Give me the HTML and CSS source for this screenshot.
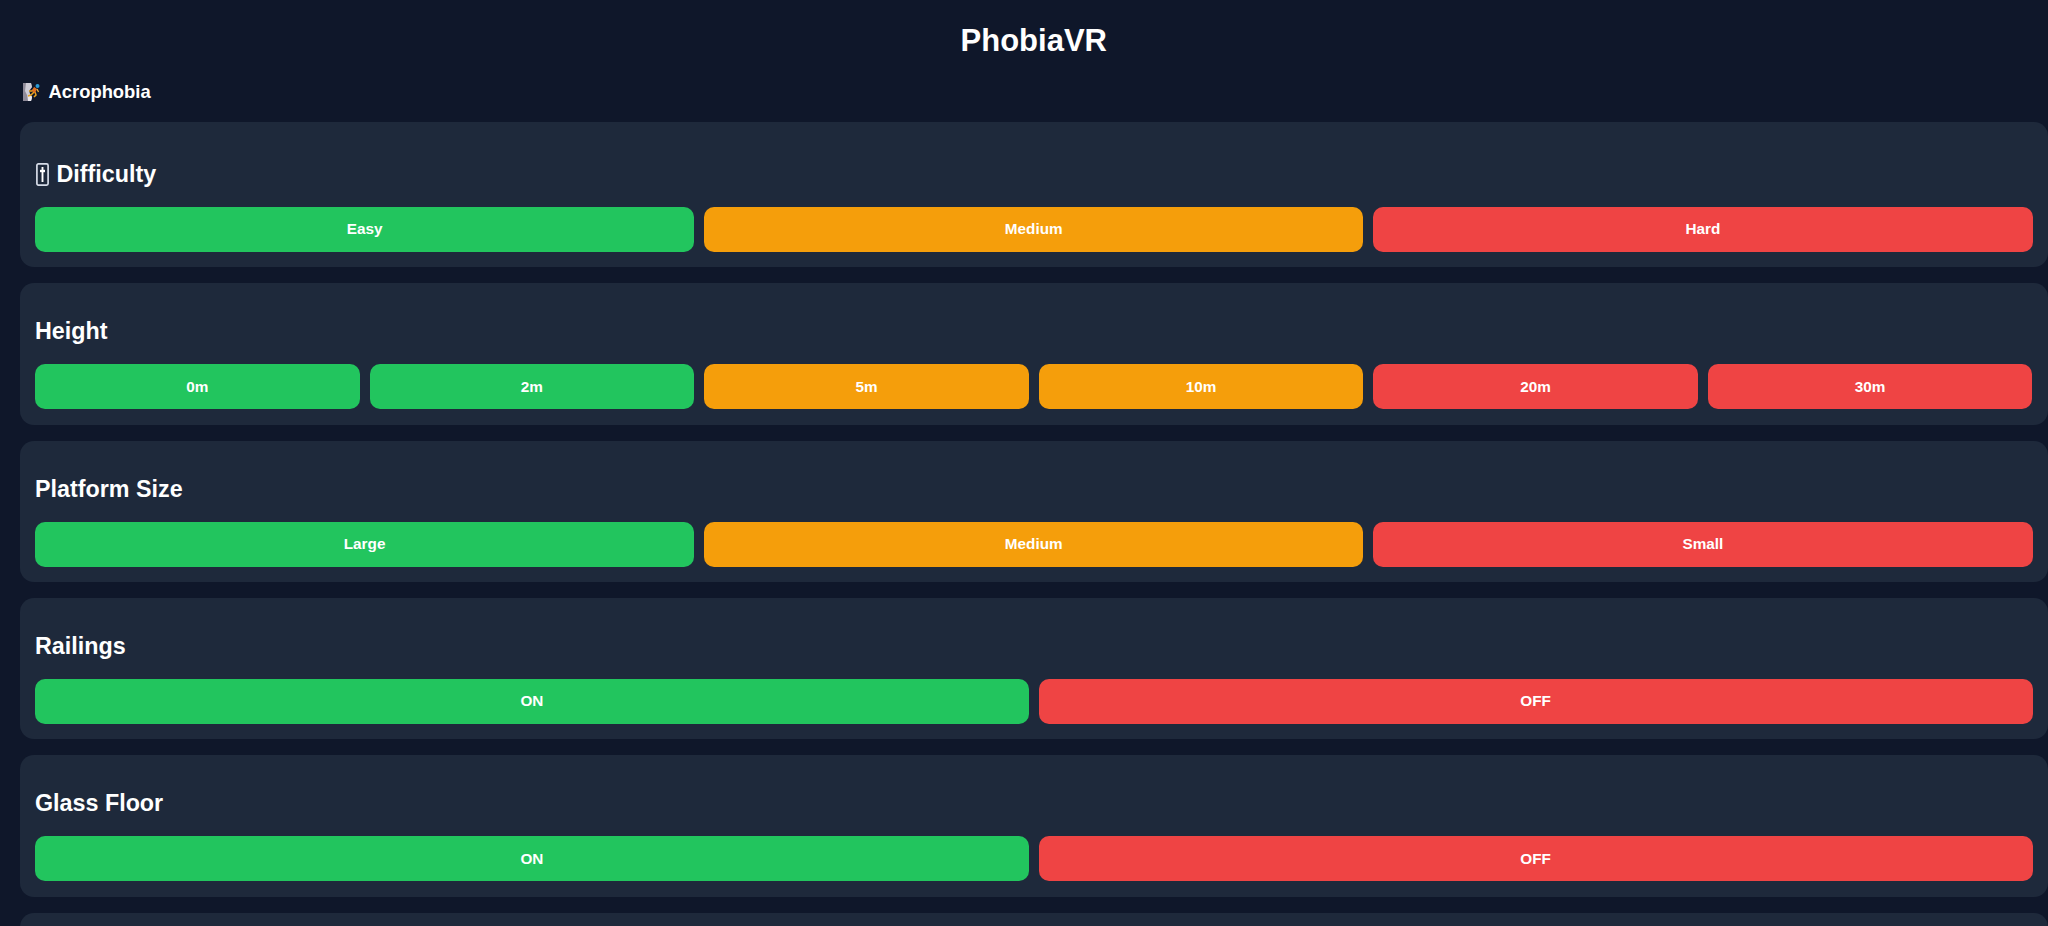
FILE: index.html
```html
<!DOCTYPE html>
<html lang="en">
<head>
<meta charset="utf-8">
<title>PhobiaVR</title>
<link rel="stylesheet" href="styles.css">
</head>
<body>
<div class="app">
  <h1 class="title">PhobiaVR</h1>
  <div class="phobia">
    <svg class="climber" viewBox="0 0 17 18" width="17" height="18" aria-hidden="true">
      <path d="M0 0h8l1 4-3 4 1 3 2 3-1 4H0z" fill="#8f8b99"/>
      <path d="M3 0h5l1 4-3 4 1 3 2 3-1 4H5l-1-6-2-4z" fill="#cfcdd6"/>
      <path d="M5 13h3l1 1-1 4H5z" fill="#eceaf0"/>
      <path d="M12 5l-3 3-3 0M11 9l-3 3-3 1M12 9l1 3-2 2" stroke="#e8a21f" stroke-width="1.5" fill="none"/>
      <path d="M11 4l3 2-2 4-3-2z" fill="#e26f24"/>
      <path d="M14 6l1.500 3" stroke="#f2b73c" stroke-width="1.2"/>
      <circle cx="14.500" cy="3" r="2" fill="#2b9bd6"/>
    </svg>
    <span>Acrophobia</span>
  </div>
  <section class="card card-first">
    <h2 class="heading">
      <svg class="slider" viewBox="0 0 13 23" width="13" height="23" aria-hidden="true">
        <rect x="0.900" y="0.900" width="11.200" height="21.200" rx="1.500" fill="none" stroke="#d6dce8" stroke-width="1.700"/>
        <path d="M6.500 4v15" stroke="#fff" stroke-width="1.900"/>
        <path d="M4 8h5" stroke="#fff" stroke-width="2.400"/>
      </svg>
      Difficulty
    </h2>
    <div class="options">
      <button class="opt green">Easy</button>
      <button class="opt orange">Medium</button>
      <button class="opt red">Hard</button>
    </div>
  </section>
  <section class="card">
    <h2 class="heading">Height</h2>
    <div class="options">
      <button class="opt green">0m</button>
      <button class="opt green">2m</button>
      <button class="opt orange">5m</button>
      <button class="opt orange">10m</button>
      <button class="opt red">20m</button>
      <button class="opt red">30m</button>
    </div>
  </section>
  <section class="card">
    <h2 class="heading">Platform Size</h2>
    <div class="options">
      <button class="opt green">Large</button>
      <button class="opt orange">Medium</button>
      <button class="opt red">Small</button>
    </div>
  </section>
  <section class="card">
    <h2 class="heading">Railings</h2>
    <div class="options">
      <button class="opt green">ON</button>
      <button class="opt red">OFF</button>
    </div>
  </section>
  <section class="card">
    <h2 class="heading">Glass Floor</h2>
    <div class="options">
      <button class="opt green">ON</button>
      <button class="opt red">OFF</button>
    </div>
  </section>
  <section class="card card-last"></section>
</div>
</body>
</html>
```
FILE: styles.css
```css
* { box-sizing: border-box; }
html, body { margin: 0; background: #0f172a; }
body {
  font-family: "Liberation Sans", Arial, sans-serif;
  color: #fff;
  overflow: hidden;
  height: 926px;
}
.app { padding: 0 0 0 19.500px; }
.title {
  margin: 0;
  padding-top: 22px;
  height: 80px;
  font-size: 31px;
  line-height: 37px;
  font-weight: 700;
  text-align: center;
}
.phobia {
  display: flex;
  align-items: center;
  gap: 9px;
  height: 24px;
  margin-bottom: 18px;
  padding-left: 3px;
  font-size: 18.400px;
  font-weight: 700;
}
.climber { display: block; }
.card {
  background: #1e293b;
  border-radius: 14px;
  padding: 15.500px;
  margin-bottom: 16px;
}
.card-last { height: 142px; }
.heading {
  margin: 19.500px 0 19.700px;
  font-size: 23.300px;
  line-height: 26.170px;
  font-weight: 700;
  display: flex;
  align-items: center;
  gap: 8px;
}
.card-first .heading { margin: 23.500px 0 19.700px; }
.slider { margin-left: 0.500px; }
.options { display: flex; gap: 10px; }
.opt {
  flex: 1 1 0;
  height: 45px;
  border: 0;
  border-radius: 10px;
  color: #fff;
  font-family: inherit;
  font-size: 15.300px;
  font-weight: 700;
}
.green { background: #22c55e; }
.orange { background: #f59e0b; }
.red { background: #ef4444; }
```
